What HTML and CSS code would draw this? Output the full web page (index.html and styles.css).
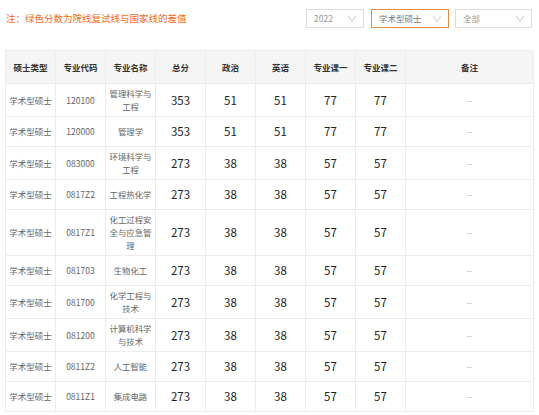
FILE: index.html
```html
<!DOCTYPE html>
<html lang="zh">
<head>
<meta charset="utf-8">
<link rel="stylesheet" href="styles.css">
</head>
<body>
<div class="topbar">
  <div class="note">注：绿色分数为院线复试线与国家线的差值</div>
  <div class="filters">
    <div class="sel sel-year"><span>2022</span><span class="arrow">∨</span></div>
    <div class="sel sel-type active"><span>学术型硕士</span><span class="arrow">∨</span></div>
    <div class="sel sel-all"><span>全部</span><span class="arrow">∨</span></div>
  </div>
</div>
<table class="grid">
  <colgroup>
    <col class="c50"><col class="c50"><col class="c50"><col class="c50"><col class="c50"><col class="c50"><col class="c50"><col class="c50"><col>
  </colgroup>
  <thead>
    <tr><th>硕士类型</th><th>专业代码</th><th>专业名称</th><th>总分</th><th>政治</th><th>英语</th><th>专业课一</th><th>专业课二</th><th>备注</th></tr>
  </thead>
  <tbody>
    <tr><td>学术型硕士</td><td>120100</td><td class="name">管理科学与工程</td><td class="num">353</td><td class="num">51</td><td class="num">51</td><td class="num">77</td><td class="num">77</td><td class="dash">--</td></tr>
    <tr><td>学术型硕士</td><td>120000</td><td class="name">管理学</td><td class="num">353</td><td class="num">51</td><td class="num">51</td><td class="num">77</td><td class="num">77</td><td class="dash">--</td></tr>
    <tr><td>学术型硕士</td><td>083000</td><td class="name">环境科学与工程</td><td class="num">273</td><td class="num">38</td><td class="num">38</td><td class="num">57</td><td class="num">57</td><td class="dash">--</td></tr>
    <tr><td>学术型硕士</td><td>0817Z2</td><td class="name">工程热化学</td><td class="num">273</td><td class="num">38</td><td class="num">38</td><td class="num">57</td><td class="num">57</td><td class="dash">--</td></tr>
    <tr><td>学术型硕士</td><td>0817Z1</td><td class="name">化工过程安全与应急管理</td><td class="num">273</td><td class="num">38</td><td class="num">38</td><td class="num">57</td><td class="num">57</td><td class="dash">--</td></tr>
    <tr><td>学术型硕士</td><td>081703</td><td class="name">生物化工</td><td class="num">273</td><td class="num">38</td><td class="num">38</td><td class="num">57</td><td class="num">57</td><td class="dash">--</td></tr>
    <tr><td>学术型硕士</td><td>081700</td><td class="name">化学工程与技术</td><td class="num">273</td><td class="num">38</td><td class="num">38</td><td class="num">57</td><td class="num">57</td><td class="dash">--</td></tr>
    <tr><td>学术型硕士</td><td>081200</td><td class="name">计算机科学与技术</td><td class="num">273</td><td class="num">38</td><td class="num">38</td><td class="num">57</td><td class="num">57</td><td class="dash">--</td></tr>
    <tr><td>学术型硕士</td><td>0811Z2</td><td class="name">人工智能</td><td class="num">273</td><td class="num">38</td><td class="num">38</td><td class="num">57</td><td class="num">57</td><td class="dash">--</td></tr>
    <tr><td>学术型硕士</td><td>0811Z1</td><td class="name">集成电路</td><td class="num">273</td><td class="num">38</td><td class="num">38</td><td class="num">57</td><td class="num">57</td><td class="dash">--</td></tr>
  </tbody>
</table>
</body>
</html>
```
FILE: styles.css
```css
html, body {
  margin: 0;
  padding: 0;
  background: #fff;
  font-family: "Noto Sans CJK SC", "Noto Sans", sans-serif;
}
.topbar {
  display: flex;
  justify-content: space-between;
  align-items: center;
  padding: 8px 7px 0 6px;
  height: 20px;
}
.note {
  font-size: 9.5px;
  color: #f26a1b;
  line-height: 20px;
}
.filters {
  display: flex;
  gap: 7px;
}
.sel {
  box-sizing: border-box;
  height: 19px;
  border: 1px solid #ddd;
  display: flex;
  align-items: center;
  justify-content: space-between;
  padding: 0 7px 0 7px;
  font-size: 8.5px;
  color: #999;
  background: #fff;
}
.sel .arrow {
  font-size: 8px;
  color: #c8c8c8;
  transform: scaleX(1.3);
}
.sel-year { width: 58px; }
.sel-type { width: 78px; border-color: #e08a4a; color: #777; }
.sel-all { width: 77px; }
.filters .sel-all { margin-left: -1px; }
.grid {
  margin: 22px 0 0 5px;
  width: 529px;
  table-layout: fixed;
  border-collapse: collapse;
  border: 1px solid #ececec;
}
.c50 { width: 50px; }
.grid th {
  background: #f5f5f5;
  height: 33px;
  box-sizing: border-box;
  font-size: 8.5px;
  font-weight: bold;
  color: #333;
  border-left: 1px solid #ececec;
  padding: 0;
}
.grid td {
  border: 1px solid #ececec;
  text-align: center;
  font-size: 8.5px;
  color: #666;
  padding: 3px 2px;
  line-height: 13px;
  height: 23px;
}
.grid td.name {
  padding: 3px 3px;
  font-size: 8.4px;
}
.grid td.num {
  font-size: 11.5px;
  color: #222;
}
.grid td.dash {
  color: #aaa;
  font-size: 8px;
}
```
